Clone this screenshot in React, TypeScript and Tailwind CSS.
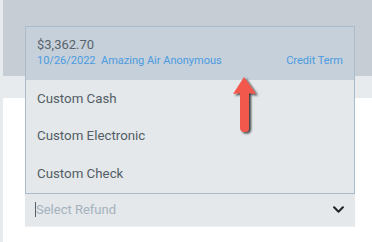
import { FaChevronDown } from "react-icons/fa";

const options = ["Custom Cash", "Custom Electronic", "Custom Check"];

const Arrow = () => (
  <svg
    className="absolute left-[230px] top-[75px]"
    width="32"
    height="62"
    viewBox="0 0 32 62"
  >
    <defs>
      <filter id="sh" x="-50%" y="-50%" width="200%" height="200%">
        <feDropShadow dx="2" dy="1.5" stdDeviation="1.2" floodColor="#000" floodOpacity="0.75" />
      </filter>
    </defs>
    <path
      d="M14 2 L26 19 L19 18 L19 53 Q19 57 14.5 57 Q10 57 10 53 L10 18 L3 19 Z"
      fill="#f2584c"
      filter="url(#sh)"
    />
  </svg>
);

export default function App() {
  return (
    <div
      className="relative w-[372px] h-[242px] overflow-hidden bg-[#e8ebed] pl-[3px] flex flex-col"
      style={{ fontFamily: "Roboto, 'Liberation Sans', sans-serif" }}
    >
      <div className="h-[76px] bg-[#c6cdd4]" />
      <div className="h-[22px]" />
      <div className="flex-1 bg-white" />

      <div className="absolute left-[25px] top-[26px] w-[330px]">
        <div className="border border-[#a9bccd] bg-[#e4e8ea]">
          <div className="h-[53px] bg-[#c5d0da] px-[11px] pt-[9px]">
            <div className="text-[13px] leading-[18px] text-[#5a636c]">$3,362.70</div>
            <div className="flex justify-between text-[11px] leading-[14px] text-[#4b9be0]">
              <span>10/26/2022&nbsp;&nbsp;Amazing Air Anonymous</span>
              <span>Credit Term</span>
            </div>
          </div>
          {options.map((o) => (
            <div key={o} className="h-[37.5px] flex items-center px-[11px] text-[13.3px] text-[#535d66]">
              {o}
            </div>
          ))}
        </div>
        <div className="h-[32px] bg-[#e5e8ea] flex items-center pl-[10px] pr-[10px] shadow-[0_1px_1px_rgba(0,0,0,0.06)]">
          <span className="w-px h-[15px] bg-[#55606a]" />
          <span className="flex-1 text-[13px] text-[#a3b2bf]">Select Refund</span>
          <FaChevronDown className="text-[#1f2529] text-[13px]" />
        </div>
      </div>

      <Arrow />
    </div>
  );
}
